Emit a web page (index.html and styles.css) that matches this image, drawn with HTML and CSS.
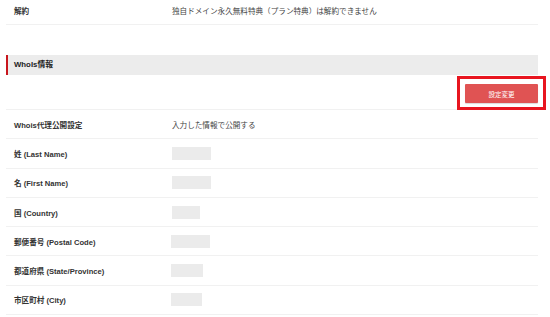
FILE: index.html
```html
<!DOCTYPE html>
<html lang="ja">
<head>
<meta charset="utf-8">
<link rel="stylesheet" href="styles.css">
</head>
<body>
<div class="page">
  <div class="row row-first">
    <div class="label">解約</div>
    <div class="value">独自ドメイン永久無料特典（プラン特典）は解約できません</div>
  </div>
  <h2 class="section">WhoIs情報</h2>
  <div class="actions">
    <span class="btn-wrap">
      <button class="btn">設定変更</button>
      <span class="highlight"></span>
    </span>
  </div>
  <div class="row">
    <div class="label">Whois代理公開設定</div>
    <div class="value">入力した情報で公開する</div>
  </div>
  <div class="row">
    <div class="label">姓 (Last Name)</div>
    <div class="value"><span class="blank" style="width:39px"></span></div>
  </div>
  <div class="row">
    <div class="label">名 (First Name)</div>
    <div class="value"><span class="blank" style="width:39px"></span></div>
  </div>
  <div class="row">
    <div class="label">国 (Country)</div>
    <div class="value"><span class="blank" style="width:28px"></span></div>
  </div>
  <div class="row">
    <div class="label">郵便番号 (Postal Code)</div>
    <div class="value shift"><span class="blank" style="width:39px"></span></div>
  </div>
  <div class="row">
    <div class="label">都道府県 (State/Province)</div>
    <div class="value shift"><span class="blank" style="width:32px"></span></div>
  </div>
  <div class="row">
    <div class="label">市区町村 (City)</div>
    <div class="value shift"><span class="blank" style="width:31px"></span></div>
  </div>
</div>
</body>
</html>
```
FILE: styles.css
```css
* { box-sizing: border-box; }
html, body { margin: 0; padding: 0; background: #fff; }
body {
  font-family: "Liberation Sans", Arial, "Noto Sans CJK JP", sans-serif;
  color: #333;
  font-size: 7.6px;
}
.page {
  margin-left: 6px;
  width: 532px;
}
.row {
  display: flex;
  align-items: center;
  height: 29.3px;
  border-bottom: 1px solid #f1f1f1;
}
.row-first {
  height: 25px;
  padding-bottom: 3px;
}
.label {
  width: 166px;
  padding-left: 8px;
  font-weight: bold;
  color: #333;
}
.value {
  color: #444;
}
.value.shift { margin-left: -1px; }
.blank {
  display: block;
  height: 13px;
  background: #ebebeb;
}
.section {
  margin: 30px 0 0 0;
  height: 20px;
  background: #ececec;
  border-left: 2px solid #c8161d;
  padding-left: 6px;
  font-size: 7.8px;
  font-weight: bold;
  line-height: 20px;
  color: #222;
}
.actions {
  display: flex;
  justify-content: flex-end;
  height: 35px;
  padding-top: 9px;
  border-bottom: 1px solid #f1f1f1;
}
.btn-wrap {
  position: relative;
  display: block;
  height: 19px;
}
.btn {
  display: block;
  width: 73px;
  height: 19px;
  margin: 0;
  padding: 0;
  border: none;
  border-radius: 1px;
  background: #e05353;
  color: #fff;
  font-family: "Noto Sans CJK JP", sans-serif;
  font-size: 6.5px;
  box-shadow: 0 1px 1px rgba(0,0,0,0.15);
}
.highlight {
  position: absolute;
  left: -8px;
  top: -8px;
  width: 89px;
  height: 34px;
  border: 3px solid #e8151f;
}
```
